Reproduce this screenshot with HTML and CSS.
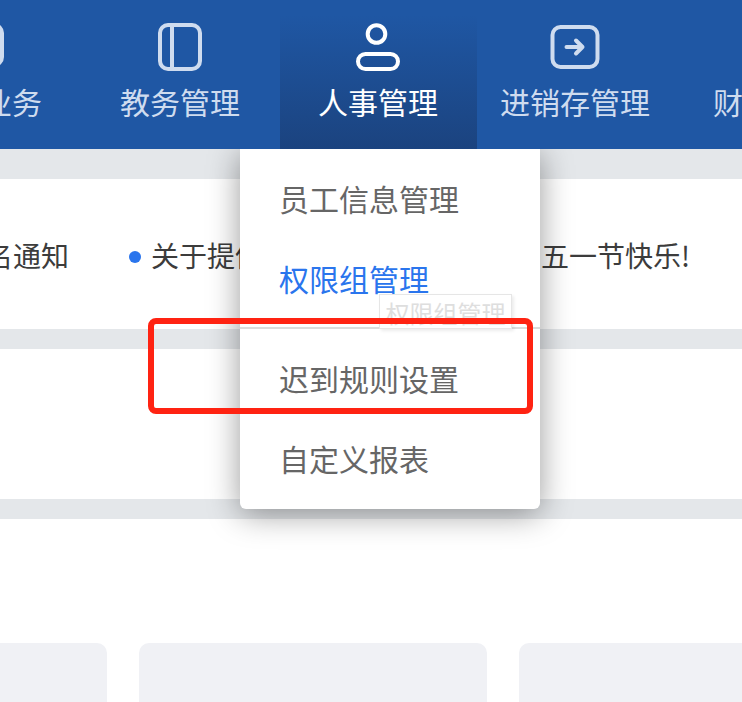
FILE: index.html
```html
<!DOCTYPE html>
<html lang="zh-CN">
<head>
<meta charset="utf-8">
<title>人事管理</title>
<link rel="stylesheet" href="styles.css">
</head>
<body>
<div class="page">
  <header class="nav">
    <div class="tab">
      <svg class="icon" viewBox="0 0 50 50" fill="none"><rect x="5" y="3" width="40" height="40" rx="8"/><path d="M25 43v6"/></svg>
      <span>销售业务</span>
    </div>
    <div class="tab">
      <svg class="icon" viewBox="0 0 50 50" fill="none"><rect x="5" y="3" width="40" height="44" rx="8"/><path d="M17 3v44"/></svg>
      <span>教务管理</span>
    </div>
    <div class="tab active">
      <svg class="icon" viewBox="0 0 50 50" fill="none"><circle cx="23.500" cy="12" r="8.800"/><rect x="5" y="32" width="40" height="15" rx="7.500"/></svg>
      <span>人事管理</span>
    </div>
    <div class="tab">
      <svg class="icon" viewBox="0 0 50 50" fill="none"><rect x="2.500" y="5" width="45" height="40" rx="8"/><path class="arrow" d="M16.500 25h16M26 18.500l6.500 6.500-6.500 6.500"/></svg>
      <span>进销存管理</span>
    </div>
    <div class="tab">
      <svg class="icon" viewBox="0 0 50 50" fill="none"><rect x="5" y="3" width="40" height="44" rx="8"/></svg>
      <span>财务管理</span>
    </div>
  </header>

  <div class="bands">
    <section class="band">
      <div class="notices">
        <span class="notice">报名通知</span>
        <span class="notice"><i class="dot"></i>关于提倡大家欢度佳节祝大家<span class="tail">五一节快乐!</span></span>
      </div>
    </section>
    <section class="band"></section>
  </div>

  <section class="cards">
    <div class="card"></div>
    <div class="card"></div>
    <div class="card"></div>
  </section>

  <div class="menu">
    <a class="item">员工信息管理</a>
    <a class="item current">权限组管理</a>
    <div class="rule"></div>
    <a class="item">迟到规则设置</a>
    <a class="item">自定义报表</a>
  </div>
  <div class="tooltip">权限组管理</div>
  <div class="highlight"></div>
</div>
</body>
</html>
```
FILE: styles.css
```css
* { box-sizing: border-box; }
html, body { margin: 0; padding: 0; }
body {
  background: #fff;
  font-family: "Noto Sans CJK SC", "Noto Sans", sans-serif;
}
.page {
  position: relative;
  width: 742px;
  height: 702px;
  overflow: hidden;
  background: #fff;
}
.nav {
  position: relative;
  z-index: 2;
  display: flex;
  height: 149px;
  margin-left: -117px;
  background: #1f57a4;
}
.tab {
  flex: none;
  width: 198px;
  padding-top: 22px;
  display: flex;
  flex-direction: column;
  align-items: center;
  color: #cfdcef;
  font-size: 30px;
  line-height: 44px;
}
.tab span { margin-top: 7px; white-space: nowrap; }
.tab.active {
  width: 197px;
  margin-left: 1px;
  padding-right: 1px;
  color: #fff;
  background: linear-gradient(180deg, #1f57a4 10%, #1b437f 100%);
}
.tab.active + .tab { width: 197px; padding-right: 1px; }
.icon {
  flex: none;
  width: 50px;
  height: 50px;
  stroke: currentColor;
  stroke-width: 4;
}
.icon .arrow { stroke-linecap: round; stroke-linejoin: round; }
.bands {
  display: flex;
  flex-direction: column;
  gap: 20px;
  padding: 30px 0 20px;
  background: #e4e7ea;
}
.band {
  height: 150px;
  overflow: hidden;
  background: #fff;
}
.notices {
  display: flex;
  align-items: center;
  gap: 60px;
  height: 100%;
  margin-left: -43px;
  padding-top: 2px;
  white-space: nowrap;
  font-size: 28px;
  line-height: 40px;
  color: #3c3c3c;
}
.notice { display: flex; align-items: center; flex: none; }
.tail { margin-left: 26px; }
.dot {
  width: 12px;
  height: 12px;
  margin: 4px 10px 0 0;
  border-radius: 50%;
  background: #2a75ed;
}
.cards {
  display: flex;
  gap: 32px;
  margin-top: 124px;
  margin-left: -241px;
}
.card {
  flex: none;
  width: 348px;
  height: 200px;
  border-radius: 10px;
  background: #f0f1f5;
}
.menu {
  position: absolute;
  z-index: 1;
  left: 240px;
  top: 149px;
  width: 300px;
  height: 360px;
  padding-top: 9px;
  display: flex;
  flex-direction: column;
  background: #fff;
  border-radius: 0 0 6px 6px;
  box-shadow: 0 5px 32px rgba(0, 0, 0, 0.4);
}
.item {
  height: 80px;
  padding-left: 39px;
  display: flex;
  align-items: center;
  flex: none;
  font-size: 30px;
  color: #666;
  white-space: nowrap;
}
.item.current { color: #2a75ed; }
.rule {
  flex: none;
  height: 2px;
  margin: 9px 0;
  background: #dcdcdc;
}
.tooltip {
  position: absolute;
  z-index: 3;
  left: 379px;
  top: 294px;
  width: 133px;
  height: 35px;
  text-align: center;
  font-size: 24px;
  line-height: 35px;
  color: #dedede;
  background: #fff;
  border: 1px solid #e6e6e6;
  box-shadow: 2px 2px 3px rgba(0, 0, 0, 0.08);
  white-space: nowrap;
}
.highlight {
  position: absolute;
  z-index: 4;
  left: 148px;
  top: 318px;
  width: 385px;
  height: 96px;
  border: 6px solid #ff2312;
  border-radius: 8px;
}
```
